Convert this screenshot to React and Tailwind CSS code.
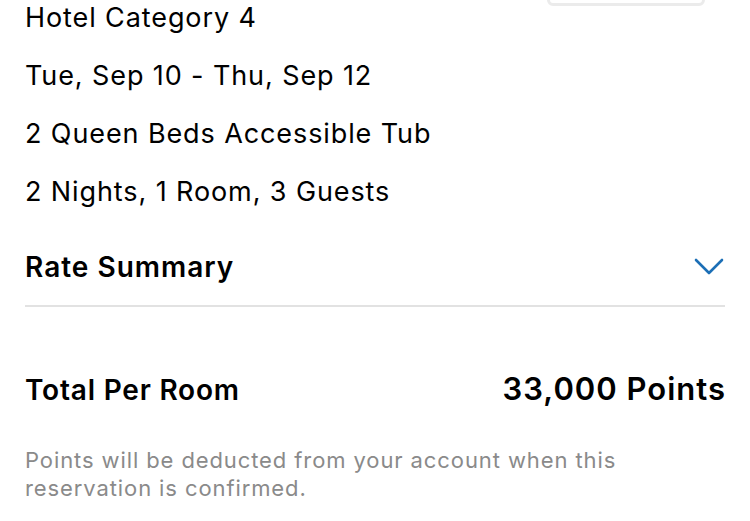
import React from "react";

function Chevron() {
  return (
    <svg width="30" height="18" viewBox="0 0 30 18" fill="none">
      <polyline
        points="2,2 15,15 28,2"
        stroke="#1c6fb6"
        strokeWidth="2.6"
        strokeLinecap="round"
        strokeLinejoin="round"
      />
    </svg>
  );
}

export default function App() {
  const details = [
    "Tue, Sep 10 - Thu, Sep 12",
    "2 Queen Beds Accessible Tub",
    "2 Nights, 1 Room, 3 Guests",
  ];

  return (
    <div
      className="w-[750px] h-[521px] overflow-hidden bg-white px-[25px] text-black"
      style={{ fontFamily: "Inter, 'Noto Sans', sans-serif" }}
    >
      <div className="flex justify-between mt-[-11px]">
        <div className="text-[27px] leading-[58px] tracking-[0.9px]">Hotel Category 4</div>
        <div className="w-[158px] h-[40px] mt-[-23px] mr-[20px] border-[3px] border-[#ebebeb] rounded-[6px] bg-white" />
      </div>
      {details.map((d) => (
        <div key={d} className="text-[27px] leading-[58px] tracking-[0.9px]">
          {d}
        </div>
      ))}

      <div className="flex items-center justify-between mt-[30px] mb-[22px]">
        <div className="text-[28px] leading-[32px] font-semibold tracking-[1px]">Rate Summary</div>
        <div className="mr-[1px]">
          <Chevron />
        </div>
      </div>
      <div className="h-[2px] bg-[#e2e2e2]" />

      <div className="flex items-baseline justify-between mt-[62px]">
        <div className="text-[28px] leading-[40px] font-semibold tracking-[0.8px]">Total Per Room</div>
        <div className="text-[31px] leading-[40px] font-semibold tracking-[1px] mr-[-1px]">33,000 Points</div>
      </div>

      <p className="mt-[36px] text-[22px] leading-[28px] text-[#8a8a8a] tracking-[0.9px] w-[640px]">
        Points will be deducted from your account when this reservation is confirmed.
      </p>
    </div>
  );
}
